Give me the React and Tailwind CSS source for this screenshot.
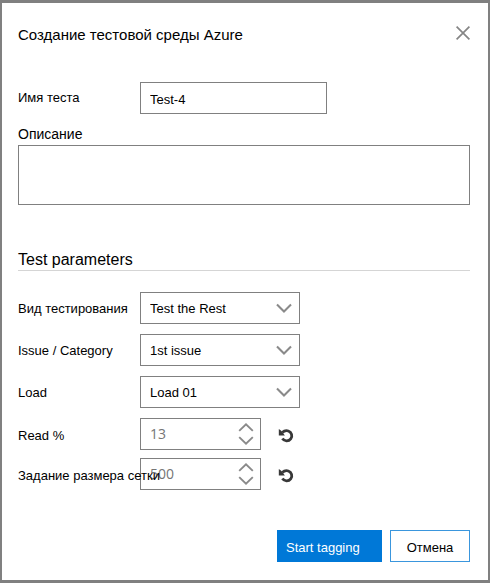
import React, { useState } from "react";

const sans = "font-['Liberation_Sans',Arial,sans-serif]";

function ChevronDown({ className }) {
  return (
    <svg className={className} width="16" height="10" viewBox="0 0 16 10" fill="none" stroke="#8a8a8a" strokeWidth="2.1" aria-hidden="true">
      <path d="M1 1.4 L8 8.4 L15 1.4" />
    </svg>
  );
}

function UndoIcon() {
  return (
    <svg width="16" height="16" viewBox="0 0 16 16" aria-hidden="true">
      <path d="M4.2 5.6 C6 3.9 8.2 3.3 10.3 4 A5.1 5.1 0 1 1 4.4 11.6" fill="none" stroke="#383838" strokeWidth="2.8" />
      <path d="M0.8 2 L3.2 3.8 L6.9 8.4 L0.8 8.4 Z" fill="#383838" />
    </svg>
  );
}

function SelectRow({ id, label, options }) {
  return (
    <div className="flex h-8 items-center">
      <label htmlFor={id} className="w-[122px] shrink-0 pt-px whitespace-nowrap">{label}</label>
      <div className="grid w-40 items-center">
        <select id={id} className="col-start-1 row-start-1 h-8 w-full appearance-none border border-[#808080] bg-white pt-px pr-8 pl-[9px] outline-none">
          {options.map((o) => (
            <option key={o}>{o}</option>
          ))}
        </select>
        <ChevronDown className="pointer-events-none col-start-1 row-start-1 mr-2 justify-self-end" />
      </div>
    </div>
  );
}

function NumberRow({ id, label, initial }) {
  const [value, setValue] = useState(initial);
  return (
    <div className="flex h-8 items-center">
      <label htmlFor={id} className="z-10 w-[122px] shrink-0 pt-[3px] whitespace-nowrap">{label}</label>
      <div className="flex h-8 w-[121px] items-center border border-[#808080] bg-white pr-[6px]">
        <input
          id={id}
          type="number"
          value={value}
          onChange={(e) => setValue(Number(e.target.value))}
          className="w-full min-w-0 appearance-none pl-[9px] font-['Open_Sans','Noto_Sans',sans-serif] text-sm text-[#757575] outline-none [-moz-appearance:textfield] [&::-webkit-inner-spin-button]:appearance-none [&::-webkit-outer-spin-button]:appearance-none"
        />
        <div className="flex flex-col gap-1">
          <button type="button" aria-label="+" onClick={() => setValue(value + 1)}>
            <svg width="16" height="9" viewBox="0 0 16 9" fill="none" stroke="#8a8a8a" strokeWidth="1.9" aria-hidden="true" className="block">
              <path d="M1.2 7.9 L8 1.3 L14.8 7.9" />
            </svg>
          </button>
          <button type="button" aria-label="−" onClick={() => setValue(value - 1)}>
            <svg width="16" height="9" viewBox="0 0 16 9" fill="none" stroke="#8a8a8a" strokeWidth="1.9" aria-hidden="true" className="block">
              <path d="M1.2 1.1 L8 7.7 L14.8 1.1" />
            </svg>
          </button>
        </div>
      </div>
      <button type="button" aria-label="Reset" className="ml-[17px] pt-px" onClick={() => setValue(initial)}>
        <UndoIcon />
      </button>
    </div>
  );
}

export default function App() {
  return (
    <form
      onSubmit={(e) => e.preventDefault()}
      className={`${sans} min-h-screen border-x-2 border-y-[3px] border-[#808080] bg-white pt-5 pr-[18px] pb-4 pl-4 text-[13px] leading-4 text-black`}
    >
      <header className="flex items-start justify-between">
        <h1 className="pt-0.5 pb-0.5 text-[15px] leading-5">Создание тестовой среды Azure</h1>
        <button type="button" aria-label="Закрыть" className="pt-[3px]">
          <svg width="14" height="14" viewBox="0 0 14 14" fill="none" stroke="#858585" strokeWidth="1.7" aria-hidden="true">
            <path d="M0.6 0.6 L13.4 13.4 M13.4 0.6 L0.6 13.4" />
          </svg>
        </button>
      </header>

      <div className="mt-[35px] flex h-8 items-center">
        <label htmlFor="name" className="w-[122px] shrink-0">Имя теста</label>
        <input id="name" defaultValue="Test-4" className="h-8 w-[187px] border border-[#808080] pt-[3px] pl-[9px] outline-none" />
      </div>

      <label htmlFor="description" className="mt-3 block text-sm leading-4">Описание</label>
      <textarea id="description" className="mt-[3px] block h-[60px] w-full resize-none border border-[#808080] p-2 outline-none" />

      <h2 className="mt-[45px] border-b border-[#d5d5d5] text-base leading-5">Test parameters</h2>

      <div className="mt-[21px] flex flex-col gap-[10px]">
        <SelectRow id="kind" label="Вид тестирования" options={["Test the Rest"]} />
        <SelectRow id="category" label="Issue / Category" options={["1st issue"]} />
        <SelectRow id="load" label="Load" options={["Load 01"]} />
        <div className="flex flex-col gap-2">
          <NumberRow id="read" label="Read %" initial={13} />
          <NumberRow id="grid" label="Задание размера сетки" initial={500} />
        </div>
      </div>

      <footer className="mt-10 flex justify-end gap-2">
        <button type="submit" className="h-8 w-[105px] bg-[#0078d7] pt-[3px] pl-[9px] text-left whitespace-nowrap text-white">Start tagging</button>
        <button type="button" className="h-8 w-20 border border-[#3a96dd] bg-white pt-[3px]">Отмена</button>
      </footer>
    </form>
  );
}
